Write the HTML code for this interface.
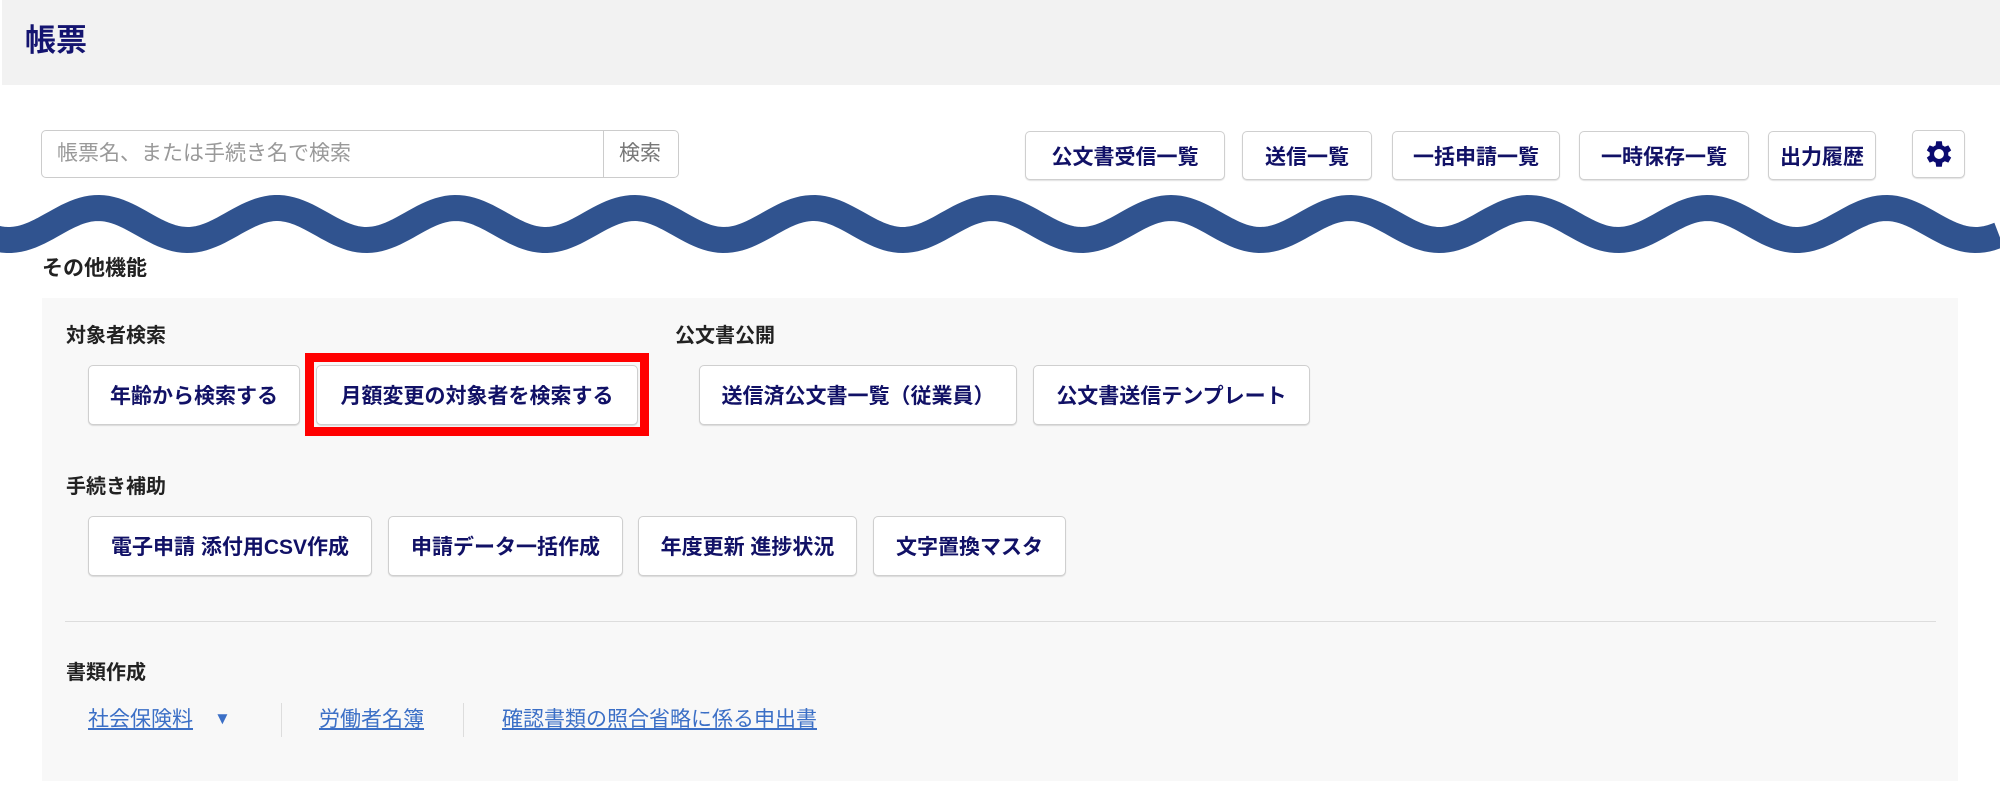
<!DOCTYPE html>
<html><head><meta charset="utf-8"><style>
body{margin:0;width:2000px;height:811px;background:#fff;position:relative;overflow:hidden;font-family:"Liberation Sans","Noto Sans CJK JP",sans-serif}
.a{position:absolute}
.hdr{left:2px;top:0;width:1998px;height:85px;background:#f2f2f2}
.title{left:25px;top:21px;font-size:31px;font-weight:bold;color:#141470;line-height:40px}
.btn{position:absolute;background:#fff;border:1px solid #cfcfcf;border-radius:5px;box-shadow:0 1px 1px rgba(0,0,0,.12);box-sizing:border-box;display:flex;align-items:center;justify-content:center;font-size:21px;font-weight:bold;color:#111166;white-space:nowrap}
.lbl{position:absolute;font-size:20px;font-weight:bold;color:#222;line-height:26px}
.lnk{position:absolute;font-size:21px;color:#3b6fc6;text-decoration:underline;line-height:28px;white-space:nowrap}
.sep{position:absolute;width:1px;background:#ddd}
</style></head><body>
<div class="a hdr"></div>
<div class="a title">帳票</div>

<div class="a" style="left:41px;top:130px;width:638px;height:48px;border:1px solid #ccc;border-radius:5px;box-sizing:border-box;background:#fff"></div>
<div class="a" style="left:603px;top:131px;width:1px;height:46px;background:#ccc"></div>
<div class="a" style="left:57px;top:140px;font-size:21px;color:#999;line-height:28px">帳票名、または手続き名で検索</div>
<div class="a" style="left:619px;top:140px;font-size:21px;color:#777;line-height:28px">検索</div>

<div class="btn" style="left:1025px;top:131px;width:200px;height:49px">公文書受信一覧</div>
<div class="btn" style="left:1242px;top:131px;width:130px;height:49px">送信一覧</div>
<div class="btn" style="left:1392px;top:131px;width:168px;height:49px">一括申請一覧</div>
<div class="btn" style="left:1579px;top:131px;width:170px;height:49px">一時保存一覧</div>
<div class="btn" style="left:1768px;top:131px;width:108px;height:49px">出力履歴</div>
<div class="btn" style="left:1912px;top:130px;width:53px;height:48px">
<svg width="34" height="34" viewBox="0 0 24 24"><path fill="#0a0a70" d="M19.4 13a7.5 7.5 0 0 0 0-2l2.1-1.6-2-3.5-2.5 1a7.7 7.7 0 0 0-1.7-1L14.9 3h-4l-.4 2.9a7.7 7.7 0 0 0-1.7 1l-2.5-1-2 3.5L6.4 11a7.5 7.5 0 0 0 0 2l-2.1 1.6 2 3.5 2.5-1a7.7 7.7 0 0 0 1.7 1l.4 2.9h4l.4-2.9a7.7 7.7 0 0 0 1.7-1l2.5 1 2-3.5zM12.9 15.5a3.5 3.5 0 1 1 0-7 3.5 3.5 0 0 1 0 7z" transform="translate(-0.9 0)"/></svg>
</div>

<svg class="a" style="left:0;top:0" width="2000" height="300">
<path id="w" fill="none" stroke="#30538f" stroke-width="26" stroke-linecap="butt" d=""/>
</svg>
<script>
(function(){var d="";for(var x=-5;x<=2000;x+=4){var y=224-16*Math.cos(2*Math.PI*(x-277)/178.8);d+=(x==-5?"M":"L")+x+" "+y.toFixed(2)+" ";}document.getElementById("w").setAttribute("d",d);})();
</script>

<div class="lbl" style="left:42px;top:256px;font-size:21px">その他機能</div>
<div class="a" style="left:42px;top:298px;width:1916px;height:483px;background:#f8f8f8"></div>

<div class="lbl" style="left:66px;top:323px">対象者検索</div>
<div class="lbl" style="left:675px;top:323px">公文書公開</div>
<div class="btn" style="left:88px;top:365px;width:212px;height:60px">年齢から検索する</div>
<div class="a" style="left:305px;top:353px;width:344px;height:83px;border:9px solid #f00;box-sizing:border-box"></div>
<div class="btn" style="left:316px;top:365px;width:322px;height:60px">月額変更の対象者を検索する</div>
<div class="btn" style="left:699px;top:365px;width:318px;height:60px">送信済公文書一覧（従業員）</div>
<div class="btn" style="left:1033px;top:365px;width:277px;height:60px">公文書送信テンプレート</div>

<div class="lbl" style="left:66px;top:474px">手続き補助</div>
<div class="btn" style="left:88px;top:516px;width:284px;height:60px">電子申請 添付用CSV作成</div>
<div class="btn" style="left:388px;top:516px;width:235px;height:60px">申請データ一括作成</div>
<div class="btn" style="left:638px;top:516px;width:219px;height:60px">年度更新 進捗状況</div>
<div class="btn" style="left:873px;top:516px;width:193px;height:60px">文字置換マスタ</div>

<div class="a" style="left:65px;top:621px;width:1871px;height:1px;background:#ddd"></div>

<div class="lbl" style="left:66px;top:660px">書類作成</div>
<div class="lnk" style="left:88px;top:706px">社会保険料</div>
<div class="a" style="left:214px;top:708px;font-size:17px;color:#3b6fc6;line-height:22px">▼</div>
<div class="sep" style="left:281px;top:703px;height:34px"></div>
<div class="lnk" style="left:319px;top:706px">労働者名簿</div>
<div class="sep" style="left:463px;top:703px;height:34px"></div>
<div class="lnk" style="left:502px;top:706px">確認書類の照合省略に係る申出書</div>
</body></html>
